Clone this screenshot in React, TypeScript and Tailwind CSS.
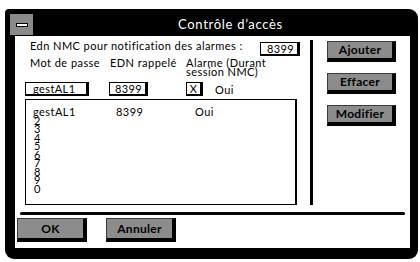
const font = { fontFamily: 'Lato, "Liberation Sans", sans-serif' }

function Bevel({ label, w, h }: { label: string; w: string; h: string }) {
  return (
    <div
      className={`${w} ${h} flex items-center justify-center bg-[#8c8c8c] border-t border-l border-[#3a3a3a] border-r-[4px] border-b-[4px] border-r-black border-b-black text-[12px] font-bold text-black tracking-[0.3px]`}
    >
      {label}
    </div>
  )
}

function Field({ children, className }: { children: React.ReactNode; className: string }) {
  return (
    <div className={`h-[14px] flex items-center bg-white border border-black border-r-[3px] border-b-2 text-[11px] leading-none tracking-[0.4px] ${className}`}>
      {children}
    </div>
  )
}

export default function App() {
  const rest = ['2', '3', '4', '5', '6', '7', '8', '9', '0']
  return (
    <div className="w-[420px] h-[262px] bg-white pt-[9px] pl-[5px]" style={font}>
      <div className="w-[413px] h-[250px] bg-black flex flex-col rounded-tl-[4px] rounded-tr-[9px] rounded-b-[9px]">
        {/* Title bar */}
        <div className="h-[27px] flex items-start shrink-0">
          <div className="ml-[5px] mt-[5px] w-[23px] h-[21px] bg-[#8a8a8a] flex items-center justify-center">
            <div className="w-[12px] h-[4px] bg-white border border-black" />
          </div>
          <div className="ml-[145px] mt-[8px] text-white text-[13px] leading-[14px] tracking-[0.7px]">Contrôle d’accès</div>
        </div>

        {/* Content */}
        <div className="ml-[10px] w-[395px] h-[212px] bg-white flex flex-col text-black tracking-[0.45px]">
          <div className="h-[176px] flex shrink-0">
            {/* Left column */}
            <div className="w-[295px] pl-[10px] pt-[4px] flex flex-col">
              <div className="w-[275px] flex items-start justify-between">
                <div className="ml-[5px] text-[11px] leading-[12px]">Edn NMC pour notification des alarmes :</div>
                <Field className="mt-[2px] w-[40px] justify-end pr-[3px]">8399</Field>
              </div>
              <div className="mt-[2px] flex items-start text-[11px] leading-[9px]">
                <div className="ml-[5px] w-[80px]">Mot de passe</div>
                <div className="w-[76px]">EDN rappelé</div>
                <div>
                  Alarme (Durant
                  <br />
                  session NMC)
                </div>
              </div>
              <div className="mt-[6px] flex items-center">
                <Field className="w-[64px] pl-[7px]">gestAL1</Field>
                <Field className="ml-[20px] w-[39px] pl-[5px]">8399</Field>
                <Field className="ml-[38px] w-[17px] justify-center">X</Field>
                <div className="ml-[12px] text-[11px] leading-none">Oui</div>
              </div>
              <div className="mt-[3px] w-[272px] h-[106px] border border-black border-r-2 pl-[7px] pt-[8px] text-[11px] leading-[8.5px]">
                <div className="flex">
                  <div className="w-[83px]">gestAL1</div>
                  <div className="w-[79px]">8399</div>
                  <div>Oui</div>
                </div>
                {rest.map((n) => (
                  <div key={n} className="pl-[1px]">{n}</div>
                ))}
              </div>
            </div>

            {/* Vertical separator */}
            <div className="mt-[4px] w-[3px] h-[165px] bg-black" />

            {/* Right buttons */}
            <div className="ml-[14px] pt-[5px] flex flex-col gap-[11px]">
              <Bevel label="Ajouter" w="w-[69px]" h="h-[21px]" />
              <Bevel label="Effacer" w="w-[69px]" h="h-[21px]" />
              <Bevel label="Modifier" w="w-[69px]" h="h-[21px]" />
            </div>
          </div>

          {/* Horizontal separator */}
          <div className="ml-[5px] w-[385px] h-[3px] bg-black rounded-full" />

          {/* Bottom buttons */}
          <div className="mt-[3px] ml-[2px] flex gap-[19px]">
            <Bevel label="OK" w="w-[70px]" h="h-[24px]" />
            <Bevel label="Annuler" w="w-[70px]" h="h-[24px]" />
          </div>
        </div>
      </div>
    </div>
  )
}
